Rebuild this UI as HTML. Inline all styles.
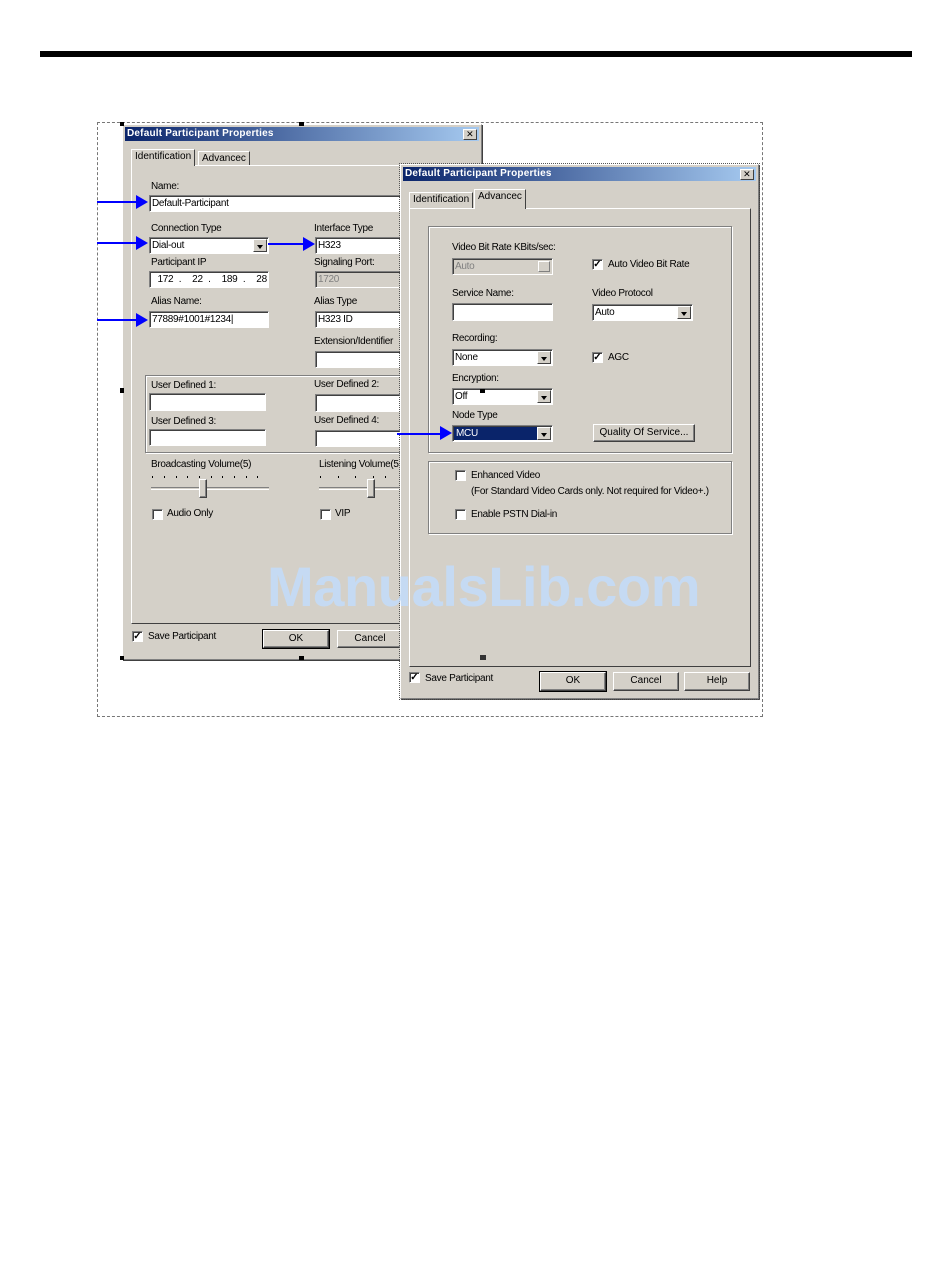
<!DOCTYPE html>
<html><head><meta charset="utf-8"><style>
body{margin:0;width:950px;height:1284px;background:#fff;position:relative;overflow:hidden;font-family:"Liberation Sans",sans-serif;}
div,span{position:absolute;box-sizing:border-box;}
.t{font-size:10px;color:#000;white-space:nowrap;letter-spacing:-0.3px;line-height:11px;}
.dlg{background:#d4d0c8;border:1px solid #808080;border-left-color:#fff;border-top-color:#fff;box-shadow:1px 1px 0 #404040;}
.title{left:2px;right:2px;top:2px;height:14px;background:linear-gradient(90deg,#0a246a,#a6caf0);color:#fff;font-weight:bold;font-size:10px;line-height:14px;padding-left:2px;letter-spacing:0.2px;}
.x{right:2px;top:2px;width:14px;height:11px;background:#d4d0c8;border:1px solid #fff;border-right-color:#404040;border-bottom-color:#404040;color:#000;font-size:9px;line-height:9px;text-align:center;font-weight:normal;}
.in{background:#fff;border:1px solid #808080;border-right-color:#fff;border-bottom-color:#fff;box-shadow:inset 1px 1px 0 #404040;font-size:10px;line-height:14px;padding-left:2px;padding-top:1px;letter-spacing:-0.3px;white-space:nowrap;}
.dis{background:#d4d0c8;color:#808080;}
.dd{top:1px;right:1px;bottom:1px;width:14px;background:#d4d0c8;border:1px solid #fff;border-right-color:#404040;border-bottom-color:#404040;}
.dd:after{content:"";position:absolute;left:3px;top:5px;border:3px solid transparent;border-top:4px solid #000;}
.grp{border:1px solid #808080;box-shadow:1px 1px 0 #fff,inset 1px 1px 0 #fff;}
.pan{border:1px solid #fff;border-right-color:#404040;border-bottom-color:#404040;}
.cb{width:11px;height:11px;background:#fff;border:1px solid #808080;border-right-color:#fff;border-bottom-color:#fff;box-shadow:inset 1px 1px 0 #404040;font-size:10px;line-height:9px;text-align:center;font-weight:bold;}
.btn{background:#d4d0c8;border:1px solid #fff;border-right-color:#404040;border-bottom-color:#404040;font-size:10px;text-align:center;line-height:16px;box-shadow:inset -1px -1px 0 #808080;}
.def{outline:1px solid #000;}
.tab{border:1px solid #fff;border-bottom:none;border-right-color:#404040;font-size:10px;padding:0 3px;line-height:14px;background:#d4d0c8;}
.arr{height:2px;background:#0000ff;}
.ah{width:0;height:0;border-top:7px solid transparent;border-bottom:7px solid transparent;border-left:12px solid #0000ff;}
.tick{width:1px;height:2px;background:#000;}
</style></head><body>
<div style="left:40px;top:51px;width:872px;height:6px;background:#000"></div>
<div style="left:97px;top:122px;width:666px;height:595px;border:1px dashed #777"></div>

<!-- dialog 1 -->
<div class="dlg" style="left:122px;top:124px;width:360px;height:536px">
 <div class="title">Default Participant Properties<span class="x">✕</span></div>
 <div class="pan" style="left:8px;top:40px;width:345px;height:459px"></div>
 <div class="tab" style="left:8px;top:24px;height:17px;border-bottom:none">Identification</div>
 <div class="tab" style="left:75px;top:26px;height:14px">Advancec</div>
 <div class="t" style="left:28px;top:56px">Name:</div>
 <div class="in" style="left:26px;top:70px;width:260px;height:17px">Default-Participant</div>
 <div class="t" style="left:28px;top:98px">Connection Type</div>
 <div class="in" style="left:26px;top:112px;width:120px;height:17px">Dial-out<span class="dd"></span></div>
 <div class="t" style="left:191px;top:98px">Interface Type</div>
 <div class="in" style="left:192px;top:112px;width:100px;height:17px">H323</div>
 <div class="t" style="left:28px;top:132px">Participant IP</div>
 <div class="in" style="left:26px;top:146px;width:120px;height:17px;word-spacing:3px">&nbsp;172 . &nbsp;22 . &nbsp;189 . &nbsp;28</div>
 <div class="t" style="left:191px;top:132px">Signaling Port:</div>
 <div class="in dis" style="left:192px;top:146px;width:100px;height:17px">1720</div>
 <div class="t" style="left:28px;top:171px">Alias Name:</div>
 <div class="in" style="left:26px;top:186px;width:120px;height:17px">77889#1001#1234|</div>
 <div class="t" style="left:191px;top:171px">Alias Type</div>
 <div class="in" style="left:192px;top:186px;width:100px;height:17px">H323 ID</div>
 <div class="t" style="left:191px;top:211px">Extension/Identifier</div>
 <div class="in" style="left:192px;top:226px;width:100px;height:17px"></div>
 <div class="grp" style="left:22px;top:250px;width:290px;height:78px"></div>
 <div class="t" style="left:28px;top:255px">User Defined 1:</div>
 <div class="in" style="left:26px;top:268px;width:117px;height:18px"></div>
 <div class="t" style="left:191px;top:254px">User Defined 2:</div>
 <div class="in" style="left:192px;top:269px;width:100px;height:18px"></div>
 <div class="t" style="left:28px;top:291px">User Defined 3:</div>
 <div class="in" style="left:26px;top:304px;width:117px;height:17px"></div>
 <div class="t" style="left:191px;top:290px">User Defined 4:</div>
 <div class="in" style="left:192px;top:305px;width:100px;height:17px"></div>
 <div class="t" style="left:28px;top:334px">Broadcasting Volume(5)</div>
 <div style="left:28px;top:362px;width:118px;height:3px;border-top:1px solid #808080;border-bottom:1px solid #fff"></div>
 <div class="tick" style="left:29px;top:351px"></div><div class="tick" style="left:41px;top:351px"></div><div class="tick" style="left:53px;top:351px"></div><div class="tick" style="left:64px;top:351px"></div><div class="tick" style="left:76px;top:351px"></div><div class="tick" style="left:88px;top:351px"></div><div class="tick" style="left:99px;top:351px"></div><div class="tick" style="left:111px;top:351px"></div><div class="tick" style="left:123px;top:351px"></div><div class="tick" style="left:134px;top:351px"></div>
 <div class="btn" style="left:76px;top:354px;width:8px;height:19px"></div>
 <div class="t" style="left:196px;top:334px">Listening Volume(5</div>
 <div style="left:196px;top:362px;width:90px;height:3px;border-top:1px solid #808080;border-bottom:1px solid #fff"></div>
 <div class="tick" style="left:197px;top:351px"></div><div class="tick" style="left:215px;top:351px"></div><div class="tick" style="left:232px;top:351px"></div><div class="tick" style="left:250px;top:351px"></div><div class="tick" style="left:262px;top:351px"></div>
 <div class="btn" style="left:244px;top:354px;width:8px;height:19px"></div>
 <div class="cb" style="left:29px;top:384px"></div><div class="t" style="left:44px;top:383px">Audio Only</div>
 <div class="cb" style="left:197px;top:384px"></div><div class="t" style="left:212px;top:383px">VIP</div>
 <div class="cb" style="left:9px;top:506px">✓</div><div class="t" style="left:25px;top:506px">Save Participant</div>
 <div class="btn def" style="left:140px;top:505px;width:66px;height:18px">OK</div>
 <div class="btn" style="left:214px;top:505px;width:66px;height:18px">Cancel</div>
</div>
<div style="left:120px;top:122px;width:4px;height:4px;background:#000"></div>
<div style="left:299px;top:122px;width:5px;height:4px;background:#000"></div>
<div style="left:120px;top:656px;width:4px;height:4px;background:#000"></div>
<div style="left:299px;top:656px;width:5px;height:4px;background:#000"></div>
<div style="left:120px;top:388px;width:4px;height:5px;background:#000"></div>

<!-- dialog 2 -->
<div class="dlg" style="left:400px;top:164px;width:359px;height:535px;outline:1px dotted #555">
 <div class="title">Default Participant Properties<span class="x">✕</span></div>
 <div class="pan" style="left:8px;top:43px;width:342px;height:459px"></div>
 <div class="tab" style="left:8px;top:27px;height:16px">Identification</div>
 <div class="tab" style="left:73px;top:24px;height:20px;border-bottom:none">Advancec</div>
 <div class="grp" style="left:27px;top:61px;width:304px;height:227px"></div>
 <div class="t" style="left:51px;top:77px">Video Bit Rate KBits/sec:</div>
 <div class="in dis" style="left:51px;top:93px;width:101px;height:17px">Auto<span style="right:2px;top:2px;width:12px;height:11px;border:1px solid #fff;border-right-color:#808080;border-bottom-color:#808080"></span></div>
 <div class="cb" style="left:191px;top:94px">✓</div><div class="t" style="left:207px;top:94px">Auto Video Bit Rate</div>
 <div class="t" style="left:51px;top:123px">Service Name:</div>
 <div class="in" style="left:51px;top:138px;width:101px;height:18px"></div>
 <div class="t" style="left:191px;top:123px">Video Protocol</div>
 <div class="in" style="left:191px;top:139px;width:101px;height:17px">Auto<span class="dd"></span></div>
 <div class="t" style="left:51px;top:168px">Recording:</div>
 <div class="in" style="left:51px;top:184px;width:101px;height:17px">None<span class="dd"></span></div>
 <div class="cb" style="left:191px;top:187px">✓</div><div class="t" style="left:207px;top:187px">AGC</div>
 <div class="t" style="left:51px;top:208px">Encryption:</div>
 <div class="in" style="left:51px;top:223px;width:101px;height:17px">Off<span class="dd"></span></div>
 <div style="left:79px;top:224px;width:5px;height:4px;background:#000"></div>
 <div class="t" style="left:51px;top:245px">Node Type</div>
 <div class="in" style="left:51px;top:260px;width:101px;height:17px;color:#fff;padding-top:0"><span style="left:1px;top:1px;width:83px;height:13px;background:#0a246a;padding-left:2px;line-height:13px">MCU</span><span class="dd"></span></div>
 <div class="btn" style="left:192px;top:259px;width:102px;height:18px">Quality Of Service...</div>
 <div class="grp" style="left:27px;top:296px;width:304px;height:73px"></div>
 <div class="cb" style="left:54px;top:305px"></div><div class="t" style="left:70px;top:305px">Enhanced Video</div>
 <div class="t" style="left:70px;top:321px">(For Standard Video Cards only. Not required for Video+.)</div>
 <div class="cb" style="left:54px;top:344px"></div><div class="t" style="left:70px;top:344px">Enable PSTN Dial-in</div>
 <div style="left:79px;top:490px;width:6px;height:5px;background:#333"></div>
 <div class="cb" style="left:8px;top:507px">✓</div><div class="t" style="left:24px;top:508px">Save Participant</div>
 <div class="btn def" style="left:139px;top:507px;width:66px;height:19px">OK</div>
 <div class="btn" style="left:212px;top:507px;width:66px;height:19px">Cancel</div>
 <div class="btn" style="left:283px;top:507px;width:66px;height:19px">Help</div>
</div>

<!-- arrows -->
<div class="arr" style="left:97px;top:201px;width:40px"></div><div class="ah" style="left:136px;top:195px"></div>
<div class="arr" style="left:97px;top:242px;width:40px"></div><div class="ah" style="left:136px;top:236px"></div>
<div class="arr" style="left:268px;top:243px;width:36px"></div><div class="ah" style="left:303px;top:237px"></div>
<div class="arr" style="left:97px;top:319px;width:40px"></div><div class="ah" style="left:136px;top:313px"></div>
<div class="arr" style="left:397px;top:433px;width:44px"></div><div class="ah" style="left:440px;top:426px"></div>

<div style="left:267px;top:557px;font-size:56px;font-weight:bold;color:#c4dcf8;letter-spacing:-0.4px;line-height:60px;white-space:nowrap;opacity:0.9">ManualsLib.com</div>
</body></html>
